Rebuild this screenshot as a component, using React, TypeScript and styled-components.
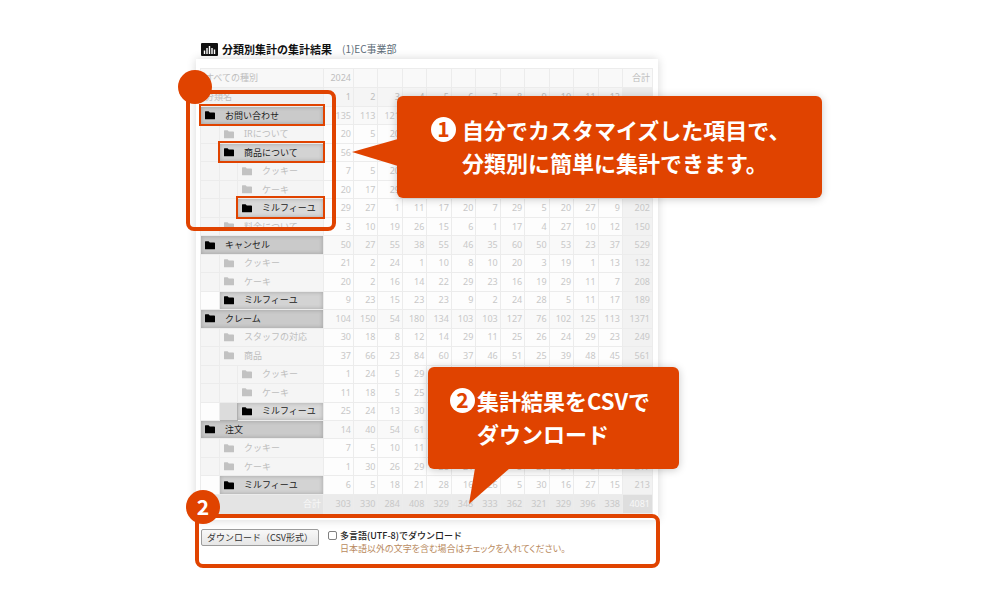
import React from "react";
import styled, { createGlobalStyle, css } from "styled-components";

const ORANGE = "#e04300";
const LINE = "#ececec";

const GlobalStyle = createGlobalStyle`
  *, *::before, *::after { box-sizing: border-box; }
  body {
    margin: 0;
    background: #fff;
    font-family: "Noto Sans CJK JP", "Noto Sans", sans-serif;
  }
`;

const Stage = styled.main`
  position: relative;
  max-width: 645px;
  margin: 0 auto;
  padding: 40px 0 24px 18px;
`;

const Heading = styled.header`
  display: flex;
  align-items: center;
  gap: 4px;
  height: 18px;
  margin-bottom: 1px;
  padding-left: 5px;
`;

const Title = styled.h1`
  margin: 0;
  color: #111;
  font-size: 11px;
  line-height: 16px;
  font-weight: 700;
`;

const Department = styled.span`
  margin-left: 6px;
  color: #5d6d78;
  font-size: 10px;
  line-height: 16px;
`;

const Panel = styled.section`
  max-width: 462px;
  padding: 9px 5px 6px 4px;
  background: #fff;
  box-shadow: 0 0 9px rgba(0, 0, 0, 0.16);
`;

const Table = styled.table`
  width: 100%;
  height: 446px;
  table-layout: fixed;
  border-collapse: collapse;
  color: #c8c8c8;
  font-size: 9px;
  line-height: 14px;
  font-family: "Noto Sans", "Noto Sans CJK JP", sans-serif;
`;

const Col = styled.col<{ $w?: number }>`
  ${(p) => p.$w && `width: ${p.$w}px;`}
`;

const HeadCell = styled.th<{ $label?: boolean; $shade: string }>`
  height: 19px;
  padding: 0 2px 0 ${(p) => (p.$label ? "4px" : "0")};
  border: 1px solid ${LINE};
  background: ${(p) => p.$shade};
  color: #bebebe;
  font-weight: 400;
  text-align: ${(p) => (p.$label ? "left" : "right")};
  white-space: nowrap;
`;

const NumCell = styled.td<{ $shade: string; $light?: boolean }>`
  padding: 0 2px 0 0;
  border: 1px solid ${LINE};
  background: ${(p) => p.$shade};
  color: ${(p) => (p.$light ? "#f8f8f8" : "inherit")};
  text-align: right;
`;

const IndentCell = styled.td<{ $tone: "plain" | "white" | "dark" }>`
  padding: 0;
  border: 1px solid ${(p) => (p.$tone === "dark" ? "#b0b0b0" : LINE)};
  background: ${(p) => ({ plain: "#f5f5f5", white: "#fdfdfd", dark: "#dcdcdc" })[p.$tone]};
`;

const levelShade = ["#cacaca", "#d3d3d3", "#d9d9d9"];

const NameCell = styled.th<{ $level: number; $strong?: boolean; $ringed?: boolean }>`
  position: relative;
  padding: 0 0 0 4px;
  border: 1px solid ${LINE};
  background: #f5f5f5;
  color: #bebebe;
  font-weight: 400;
  text-align: left;
  white-space: nowrap;
  ${(p) =>
    p.$strong &&
    css`
      background: ${levelShade[p.$level]};
      color: #222;
      box-shadow: inset 0 0 4px rgba(0, 0, 0, 0.22), 0 0 0 1px #aaa;
    `}
  ${(p) =>
    p.$ringed &&
    css`
      z-index: 1;
      &::after {
        content: "";
        position: absolute;
        inset: -3px -2px -2px -2px;
        border: 2px solid ${ORANGE};
      }
    `}
`;

const NameInner = styled.span`
  display: flex;
  align-items: center;
  gap: 10px;
`;

const FootLabel = styled.th`
  height: 19px;
  padding: 0 2px 0 0;
  background: #e4e4e4;
  color: #f8f8f8;
  font-weight: 400;
  text-align: right;
`;

const Download = styled.form`
  display: flex;
  align-items: flex-start;
  gap: 9px;
  padding: 9px 0 0 5px;
`;

const DownloadButton = styled.button`
  width: 118px;
  height: 17px;
  padding: 0;
  border: 1px solid #9c9c9c;
  border-radius: 2px;
  background: linear-gradient(#f8f8f8, #e6e6e6);
  color: #333;
  font: 9px/15px "Noto Sans CJK JP", sans-serif;
  white-space: nowrap;
`;

const Option = styled.div`
  display: grid;
  grid-template-columns: 9px auto;
  column-gap: 3px;
  align-items: center;
`;

const Tick = styled.input`
  appearance: none;
  width: 9px;
  height: 9px;
  margin: 0;
  border: 1px solid #808080;
  border-radius: 2px;
  background: #fff;
`;

const OptionLabel = styled.label`
  color: #222;
  font-size: 9px;
  line-height: 13px;
  font-weight: 500;
`;

const Hint = styled.p`
  grid-column: 2;
  margin: 0;
  color: #b98a5e;
  font-size: 9px;
  line-height: 13px;
  font-feature-settings: "palt";
`;

const Frame = styled.div<{ $x: number; $y: number; $w: number; $h: number }>`
  position: absolute;
  z-index: 2;
  left: ${(p) => p.$x}px;
  top: ${(p) => p.$y}px;
  width: ${(p) => p.$w}px;
  height: ${(p) => p.$h}px;
  border: 4px solid ${ORANGE};
  border-radius: 8px;
  pointer-events: none;
`;

const Marker = styled.span<{ $x: number; $y: number }>`
  position: absolute;
  z-index: 2;
  left: ${(p) => p.$x}px;
  top: ${(p) => p.$y}px;
  width: 34px;
  height: 34px;
  border-radius: 50%;
  background: ${ORANGE};
  color: #fff;
  font: 700 21px/32px "Noto Sans CJK JP", sans-serif;
  text-align: center;
`;

const Callout = styled.aside<{ $x: number; $y: number; $w: number; $gap: number; $pad: number }>`
  position: absolute;
  z-index: 2;
  left: ${(p) => p.$x}px;
  top: ${(p) => p.$y}px;
  width: ${(p) => p.$w}px;
  display: flex;
  gap: ${(p) => p.$gap}px;
  padding: 17px 0 19px ${(p) => p.$pad}px;
  border-radius: 6px;
  background: ${ORANGE};
  box-shadow: 0 1px 8px rgba(0, 0, 0, 0.22);
`;

const Badge = styled.span`
  flex: none;
  width: 25px;
  height: 25px;
  margin-top: 4px;
  border-radius: 50%;
  background: #fff;
  color: ${ORANGE};
  font: 700 21px/23px "Noto Sans CJK JP", sans-serif;
  text-align: center;
`;

const CalloutText = styled.p`
  margin: 0;
  color: #fff;
  font-size: 22px;
  line-height: 33px;
  font-weight: 700;
  white-space: nowrap;
`;

const Tail = styled.svg<{ $x: number; $y: number }>`
  position: absolute;
  z-index: 2;
  left: ${(p) => p.$x}px;
  top: ${(p) => p.$y}px;
  fill: ${ORANGE};
`;

const Folder = ({ dark }: { dark?: boolean }) => (
  <svg width="10" height="9" viewBox="0 0 10 9" fill={dark ? "#000" : "#c2c2c2"} aria-hidden="true">
    <path d="M0 .8Q0 .3.5.3H3.6L4.8 1.5H9.2Q10 1.5 10 2.2V7.7Q10 8.2 9.5 8.2H.5Q0 8.2 0 7.7Z" />
  </svg>
);

const ChartIcon = () => (
  <svg width="17" height="13" viewBox="0 0 17 13" aria-hidden="true">
    <rect width="17" height="13" rx="1" fill="#111" />
    <path d="M3.5 11V7.5M6 11V5M8.5 11V3M11 11V5M13.5 11V6.5" stroke="#fff" strokeWidth="1.4" />
  </svg>
);

type Row = {
  name: string;
  level: number;
  strong?: boolean;
  ringed?: boolean;
  darkFrom?: number;
  values: number[];
};

const rows: Row[] = [
  { name: "お問い合わせ", level: 0, strong: true, ringed: true, values: [135, 113, 121] },
  { name: "IRについて", level: 1, values: [20, 5, 20] },
  { name: "商品について", level: 1, strong: true, ringed: true, values: [56] },
  { name: "クッキー", level: 2, values: [7, 5, 20] },
  { name: "ケーキ", level: 2, values: [20, 17, 29] },
  { name: "ミルフィーユ", level: 2, strong: true, ringed: true, values: [29, 27, 1, 11, 17, 20, 7, 29, 5, 20, 27, 9, 202] },
  { name: "料金について", level: 1, values: [3, 10, 19, 26, 15, 6, 1, 17, 4, 27, 10, 12, 150] },
  { name: "キャンセル", level: 0, strong: true, values: [50, 27, 55, 38, 55, 46, 35, 60, 50, 53, 23, 37, 529] },
  { name: "クッキー", level: 1, values: [21, 2, 24, 1, 10, 8, 10, 20, 3, 19, 1, 13, 132] },
  { name: "ケーキ", level: 1, values: [20, 2, 16, 14, 22, 29, 23, 16, 19, 29, 11, 7, 208] },
  { name: "ミルフィーユ", level: 1, strong: true, values: [9, 23, 15, 23, 23, 9, 2, 24, 28, 5, 11, 17, 189] },
  { name: "クレーム", level: 0, strong: true, values: [104, 150, 54, 180, 134, 103, 103, 127, 76, 102, 125, 113, 1371] },
  { name: "スタッフの対応", level: 1, values: [30, 18, 8, 12, 14, 29, 11, 25, 26, 24, 29, 23, 249] },
  { name: "商品", level: 1, values: [37, 66, 23, 84, 60, 37, 46, 51, 25, 39, 48, 45, 561] },
  { name: "クッキー", level: 2, values: [1, 24, 5, 29] },
  { name: "ケーキ", level: 2, values: [11, 18, 5, 25] },
  { name: "ミルフィーユ", level: 2, strong: true, darkFrom: 1, values: [25, 24, 13, 30] },
  { name: "注文", level: 0, strong: true, values: [14, 40, 54, 61] },
  { name: "クッキー", level: 1, values: [7, 5, 10, 11] },
  { name: "ケーキ", level: 1, values: [1, 30, 26, 29, 28, 21, 9, 5, 26, 24, 3, 15, 217] },
  { name: "ミルフィーユ", level: 1, strong: true, values: [6, 5, 18, 21, 28, 16, 26, 5, 30, 16, 27, 15, 213] },
];

const totals = [303, 330, 284, 408, 329, 348, 333, 362, 321, 329, 396, 338, 4081];
const months = Array.from({ length: 12 }, (_, i) => i + 1);

const indentTone = (row: Row, depth: number) => {
  if (row.darkFrom !== undefined && depth >= row.darkFrom) return "dark";
  return row.strong && !row.ringed ? "white" : "plain";
};

const ResultTable = () => (
  <Table>
    <colgroup>
      <Col $w={19} />
      <Col $w={18} />
      <Col $w={86} />
      <Col $w={30} />
      {months.slice(1).map((m) => (
        <Col key={m} />
      ))}
      <Col $w={30} />
    </colgroup>
    <thead>
      <tr>
        <HeadCell $label $shade="#f8f8f8" colSpan={3}>すべての種別</HeadCell>
        <HeadCell $shade="#f9f9f9">2024</HeadCell>
        {months.slice(1).map((m) => (
          <HeadCell key={m} $shade="#f9f9f9" />
        ))}
        <HeadCell $shade="#f9f9f9">合計</HeadCell>
      </tr>
      <tr>
        <HeadCell $label $shade="#f1f1f1" colSpan={3}>分類名</HeadCell>
        {months.map((m) => (
          <HeadCell key={m} $shade="#f5f5f5">{m}</HeadCell>
        ))}
        <HeadCell $shade="#ececec" />
      </tr>
    </thead>
    <tbody>
      {rows.map((row, i) => (
        <tr key={i}>
          {Array.from({ length: row.level }, (_, d) => (
            <IndentCell key={d} $tone={indentTone(row, d)} />
          ))}
          <NameCell
            scope="row"
            colSpan={3 - row.level}
            $level={row.level}
            $strong={row.strong}
            $ringed={row.ringed}
          >
            <NameInner>
              <Folder dark={row.strong} />
              {row.name}
            </NameInner>
          </NameCell>
          {totals.map((_, c) => (
            <NumCell key={c} $shade={c === 12 ? "#f2f2f2" : row.level === 0 ? "#f9f9f9" : "#fdfdfd"}>
              {row.values[c]}
            </NumCell>
          ))}
        </tr>
      ))}
    </tbody>
    <tfoot>
      <tr>
        <FootLabel scope="row" colSpan={3}>合計</FootLabel>
        {totals.map((v, c) => (
          <NumCell key={c} $shade={c === 12 ? "#dedede" : "#ebebeb"} $light={c === 12}>
            {v}
          </NumCell>
        ))}
      </tr>
    </tfoot>
  </Table>
);

export default function App() {
  return (
    <>
      <GlobalStyle />
      <Stage>
        <Heading>
          <ChartIcon />
          <Title>分類別集計の集計結果</Title>
          <Department>(1)EC事業部</Department>
        </Heading>
        <Panel>
          <ResultTable />
        </Panel>
        <Download onSubmit={(e) => e.preventDefault()}>
          <DownloadButton type="submit">ダウンロード（CSV形式）</DownloadButton>
          <Option>
            <Tick type="checkbox" id="utf8" />
            <OptionLabel htmlFor="utf8">多言語(UTF-8)でダウンロード</OptionLabel>
            <Hint>日本語以外の文字を含む場合はチェックを入れてください。</Hint>
          </Option>
        </Download>

        <Frame $x={8} $y={90} $w={150} $h={141} />
        <Marker $x={0} $y={70} />
        <Frame $x={17} $y={514} $w={465} $h={54} />
        <Marker $x={8} $y={490}>2</Marker>

        <Callout $x={219} $y={96} $w={425} $gap={6} $pad={34}>
          <Badge>1</Badge>
          <CalloutText>
            自分でカスタマイズした項目で、
            <br />
            分類別に簡単に集計できます。
          </CalloutText>
        </Callout>
        <Tail $x={174} $y={139} width="46" height="27" viewBox="0 0 46 27" aria-hidden="true">
          <path d="M0 13L46 0V27Z" />
        </Tail>

        <Callout $x={250} $y={367} $w={251} $gap={2} $pad={22}>
          <Badge>2</Badge>
          <CalloutText>
            集計結果をCSVで
            <br />
            ダウンロード
          </CalloutText>
        </Callout>
        <Tail $x={291} $y={468} width="42" height="36" viewBox="0 0 42 36" aria-hidden="true">
          <path d="M6 0H41L0 36Z" />
        </Tail>
      </Stage>
    </>
  );
}
